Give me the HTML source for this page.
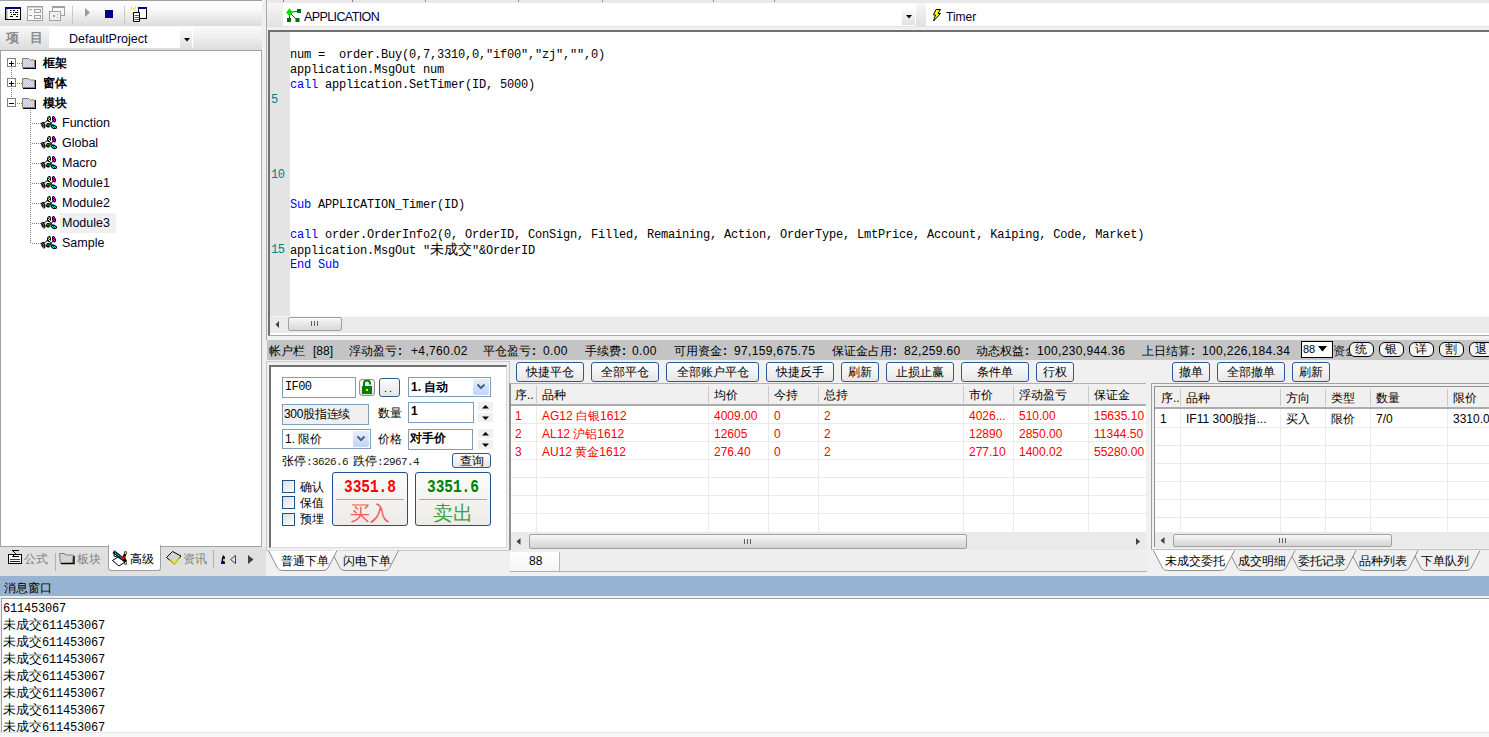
<!DOCTYPE html>
<html><head><meta charset="utf-8">
<style>
*{box-sizing:border-box}
html,body{margin:0;padding:0}
body{width:1489px;height:737px;overflow:hidden;position:relative;background:#F0F0F0;font-family:"Liberation Sans",sans-serif;font-size:12px;color:#000}
.a{position:absolute}
.t{position:absolute;white-space:nowrap;line-height:14px}
.mono{font-family:"Liberation Mono",monospace}
.btn{position:absolute;border:1px solid #2A5A94;border-radius:3px;background:linear-gradient(#FDFDFD,#E6E6E6);text-align:center;line-height:17px;padding-top:1px;white-space:nowrap}
.grid-h{position:absolute;background:#F0F0F0;border-bottom:2px solid #D5D5D5}
.vl{position:absolute;width:1px;background:#EAEAEA}
.hl{position:absolute;height:1px;background:#EAEAEA}
</style></head><body>

<!-- ============ LEFT PANEL ============ -->
<div class="a" style="left:0;top:0;width:262px;height:1px;background:#A0A0A0"></div>
<div class="a" style="left:0;top:1px;width:262px;height:25px;background:linear-gradient(#FDFDFD,#FAFAFA 30%,#DCDCDC)"></div>
<div class="a" style="left:0;top:26px;width:262px;height:24px;background:linear-gradient(#F8F8F8,#DCDCDC)"></div>
<svg class="a" style="left:0;top:0" width="262" height="26">
<rect x="5.5" y="7.5" width="15" height="12" fill="#FFF" stroke="#000"/><rect x="5" y="7" width="16" height="2" fill="#000080"/><rect x="6" y="9" width="1.5" height="10" fill="#A0A0A0"/>
<path d="M10 10.5H11.5M13 10.5H15M17 10.5H18M10 12.5H11.5M13 12.5H14M15 12.5H18M11 14.5H12M13 14.5H16M17 14.5H18M10 16.5H13M16 16.5H18" stroke="#000" stroke-width="1"/>
<rect x="27.5" y="6.5" width="15" height="14" fill="#F8F8F8" stroke="#A0A0A0"/><rect x="27" y="6" width="16" height="1.5" fill="#A0A0A0"/>
<path d="M29 9.5H32M29 15.5H32" stroke="#A0A0A0"/><rect x="34.5" y="9.5" width="6" height="3" fill="none" stroke="#A0A0A0"/><rect x="34.5" y="15.5" width="6" height="3" fill="none" stroke="#A0A0A0"/>
<rect x="52.5" y="6.5" width="12" height="9" fill="none" stroke="#A0A0A0"/><rect x="52" y="6" width="13" height="2" fill="#A0A0A0"/>
<rect x="49.5" y="11.5" width="11" height="9" fill="#F0F0F0" stroke="#A0A0A0"/><rect x="53" y="15" width="2" height="2" fill="#A0A0A0"/><rect x="57" y="14" width="1" height="1" fill="#A0A0A0"/><rect x="57" y="17" width="1" height="1" fill="#A0A0A0"/>
<rect x="72" y="6" width="1" height="18" fill="#C8C8C8"/>
<path d="M85 8V17L90 12.5Z" fill="#9A9A9A"/>
<rect x="105" y="10" width="8" height="8" fill="#000080"/>
<rect x="124" y="6" width="1" height="18" fill="#C8C8C8"/>
<rect x="138.5" y="7.5" width="8" height="11" fill="#FFF" stroke="#000"/><rect x="138" y="7" width="9" height="2" fill="#000080"/>
<path d="M131.5 6V10M133 8L137 12M136 6.5L134 9.5M131 13H134" stroke="#F0F000" stroke-width="1"/>
<path d="M133.5 12.5H139.5V21.5H133.5Z" fill="#FFF" stroke="#000"/><path d="M134.5 15.5H139M134.5 17.5H139M134.5 19.5H139" stroke="#2020D0" stroke-width="0.8"/>
</svg>
<div class="t" style="left:6px;top:31px;color:#8C8C8C;font-size:13px;letter-spacing:11px;font-weight:bold">项目</div>
<div class="a" style="left:49px;top:27px;width:213px;height:21px;background:#FFF"></div>
<div class="a" style="left:180px;top:30px;width:12px;height:18px;background:linear-gradient(#F8F8F8,#E0E0E0)"></div>
<div class="a" style="left:193px;top:27px;width:69px;height:21px;background:linear-gradient(#FAFAFA,#E0E0E0)"></div>
<div class="t" style="left:69px;top:32px;color:#000030;font-size:12.5px">DefaultProject</div>
<svg class="a" style="left:184px;top:38px" width="8" height="5"><path d="M0 0H6L3 3.5Z" fill="#000"/></svg>

<!-- tree box -->
<div class="a" style="left:0;top:50px;width:262px;height:497px;background:#FFF;border:1px solid #A0A0A0;border-right-color:#A8A8A8"></div>

<svg class="a" style="left:0;top:50px" width="262" height="496">
<defs><pattern id="dith" width="2" height="2" patternUnits="userSpaceOnUse"><rect width="2" height="2" fill="#C8C8D0"/><rect width="1" height="1" fill="#FFFF00"/><rect x="1" y="1" width="1" height="1" fill="#FFFF00"/></pattern></defs>
<rect x="11" y="18" width="1" height="1" fill="#808080"/><rect x="11" y="20" width="1" height="1" fill="#808080"/><rect x="11" y="22" width="1" height="1" fill="#808080"/><rect x="11" y="24" width="1" height="1" fill="#808080"/><rect x="11" y="26" width="1" height="1" fill="#808080"/><rect x="11" y="28" width="1" height="1" fill="#808080"/><rect x="11" y="30" width="1" height="1" fill="#808080"/><rect x="11" y="32" width="1" height="1" fill="#808080"/><rect x="11" y="34" width="1" height="1" fill="#808080"/><rect x="11" y="36" width="1" height="1" fill="#808080"/><rect x="11" y="38" width="1" height="1" fill="#808080"/><rect x="11" y="40" width="1" height="1" fill="#808080"/><rect x="11" y="42" width="1" height="1" fill="#808080"/><rect x="11" y="44" width="1" height="1" fill="#808080"/><rect x="11" y="46" width="1" height="1" fill="#808080"/><rect x="11" y="48" width="1" height="1" fill="#808080"/>
<rect x="17" y="13" width="1" height="1" fill="#808080"/><rect x="19" y="13" width="1" height="1" fill="#808080"/><rect x="21" y="13" width="1" height="1" fill="#808080"/>
<rect x="7.5" y="8.5" width="8" height="8" fill="#FFF" stroke="#808080"/>
<rect x="9" y="13" width="5" height="1" fill="#000"/>
<rect x="11" y="11" width="1" height="5" fill="#000"/>
<g transform="translate(21,6)"><path d="M1.5 2.5H7.5L9 4H13.5V11.5H1.5Z" fill="url(#dith)" stroke="#808080"/><path d="M14 4V12H2V13H15V4Z" fill="#000"/></g>
<rect x="17" y="33" width="1" height="1" fill="#808080"/><rect x="19" y="33" width="1" height="1" fill="#808080"/><rect x="21" y="33" width="1" height="1" fill="#808080"/>
<rect x="7.5" y="28.5" width="8" height="8" fill="#FFF" stroke="#808080"/>
<rect x="9" y="33" width="5" height="1" fill="#000"/>
<rect x="11" y="31" width="1" height="5" fill="#000"/>
<g transform="translate(21,26)"><path d="M1.5 2.5H7.5L9 4H13.5V11.5H1.5Z" fill="url(#dith)" stroke="#808080"/><path d="M14 4V12H2V13H15V4Z" fill="#000"/></g>
<rect x="17" y="53" width="1" height="1" fill="#808080"/><rect x="19" y="53" width="1" height="1" fill="#808080"/><rect x="21" y="53" width="1" height="1" fill="#808080"/>
<rect x="7.5" y="48.5" width="8" height="8" fill="#FFF" stroke="#808080"/>
<rect x="9" y="53" width="5" height="1" fill="#000"/>
<g transform="translate(21,46)"><path d="M1.5 2.5H7.5L9 4H13.5V11.5H1.5Z" fill="url(#dith)" stroke="#808080"/><path d="M14 4V12H2V13H15V4Z" fill="#000"/></g>
<rect x="30" y="60" width="1" height="1" fill="#808080"/><rect x="30" y="62" width="1" height="1" fill="#808080"/><rect x="30" y="64" width="1" height="1" fill="#808080"/><rect x="30" y="66" width="1" height="1" fill="#808080"/><rect x="30" y="68" width="1" height="1" fill="#808080"/><rect x="30" y="70" width="1" height="1" fill="#808080"/><rect x="30" y="72" width="1" height="1" fill="#808080"/><rect x="30" y="74" width="1" height="1" fill="#808080"/><rect x="30" y="76" width="1" height="1" fill="#808080"/><rect x="30" y="78" width="1" height="1" fill="#808080"/><rect x="30" y="80" width="1" height="1" fill="#808080"/><rect x="30" y="82" width="1" height="1" fill="#808080"/><rect x="30" y="84" width="1" height="1" fill="#808080"/><rect x="30" y="86" width="1" height="1" fill="#808080"/><rect x="30" y="88" width="1" height="1" fill="#808080"/><rect x="30" y="90" width="1" height="1" fill="#808080"/><rect x="30" y="92" width="1" height="1" fill="#808080"/><rect x="30" y="94" width="1" height="1" fill="#808080"/><rect x="30" y="96" width="1" height="1" fill="#808080"/><rect x="30" y="98" width="1" height="1" fill="#808080"/><rect x="30" y="100" width="1" height="1" fill="#808080"/><rect x="30" y="102" width="1" height="1" fill="#808080"/><rect x="30" y="104" width="1" height="1" fill="#808080"/><rect x="30" y="106" width="1" height="1" fill="#808080"/><rect x="30" y="108" width="1" height="1" fill="#808080"/><rect x="30" y="110" width="1" height="1" fill="#808080"/><rect x="30" y="112" width="1" height="1" fill="#808080"/><rect x="30" y="114" width="1" height="1" fill="#808080"/><rect x="30" y="116" width="1" height="1" fill="#808080"/><rect x="30" y="118" width="1" height="1" fill="#808080"/><rect x="30" y="120" width="1" height="1" fill="#808080"/><rect x="30" y="122" width="1" height="1" fill="#808080"/><rect x="30" y="124" width="1" height="1" fill="#808080"/><rect x="30" y="126" width="1" height="1" fill="#808080"/><rect x="30" y="128" width="1" height="1" fill="#808080"/><rect x="30" y="130" width="1" height="1" fill="#808080"/><rect x="30" y="132" width="1" height="1" fill="#808080"/><rect x="30" y="134" width="1" height="1" fill="#808080"/><rect x="30" y="136" width="1" height="1" fill="#808080"/><rect x="30" y="138" width="1" height="1" fill="#808080"/><rect x="30" y="140" width="1" height="1" fill="#808080"/><rect x="30" y="142" width="1" height="1" fill="#808080"/><rect x="30" y="144" width="1" height="1" fill="#808080"/><rect x="30" y="146" width="1" height="1" fill="#808080"/><rect x="30" y="148" width="1" height="1" fill="#808080"/><rect x="30" y="150" width="1" height="1" fill="#808080"/><rect x="30" y="152" width="1" height="1" fill="#808080"/><rect x="30" y="154" width="1" height="1" fill="#808080"/><rect x="30" y="156" width="1" height="1" fill="#808080"/><rect x="30" y="158" width="1" height="1" fill="#808080"/><rect x="30" y="160" width="1" height="1" fill="#808080"/><rect x="30" y="162" width="1" height="1" fill="#808080"/><rect x="30" y="164" width="1" height="1" fill="#808080"/><rect x="30" y="166" width="1" height="1" fill="#808080"/><rect x="30" y="168" width="1" height="1" fill="#808080"/><rect x="30" y="170" width="1" height="1" fill="#808080"/><rect x="30" y="172" width="1" height="1" fill="#808080"/><rect x="30" y="174" width="1" height="1" fill="#808080"/><rect x="30" y="176" width="1" height="1" fill="#808080"/><rect x="30" y="178" width="1" height="1" fill="#808080"/><rect x="30" y="180" width="1" height="1" fill="#808080"/><rect x="30" y="182" width="1" height="1" fill="#808080"/><rect x="30" y="184" width="1" height="1" fill="#808080"/><rect x="30" y="186" width="1" height="1" fill="#808080"/><rect x="30" y="188" width="1" height="1" fill="#808080"/><rect x="30" y="190" width="1" height="1" fill="#808080"/><rect x="30" y="192" width="1" height="1" fill="#808080"/>
<rect x="32" y="73" width="1" height="1" fill="#808080"/><rect x="34" y="73" width="1" height="1" fill="#808080"/><rect x="36" y="73" width="1" height="1" fill="#808080"/><rect x="38" y="73" width="1" height="1" fill="#808080"/><rect x="40" y="73" width="1" height="1" fill="#808080"/>
<g transform="translate(41,66)"><path d="M3 7L7 4M8 5L12 10M8 10L12 5" stroke="#000" stroke-width="1"/>
<path d="M6.5 1L8 0H9L10 1.5V4L8.5 6H7L6 4.5V2.5Z" fill="#000"/><rect x="7.5" y="1" width="1" height="1" fill="#FF0"/><rect x="8" y="2" width="1" height="1" fill="#FF0"/><rect x="7" y="3" width="1" height="1" fill="#FF0"/><rect x="8" y="4" width="1" height="1" fill="#FF0"/><rect x="7.5" y="2.5" width="1" height="1" fill="#FF0"/>
<path d="M11 1L12 0H13L15 3V5L14 6.5H13L11 4Z" fill="#000"/><rect x="12" y="1" width="1" height="1" fill="#F0F"/><rect x="13" y="2" width="1" height="1" fill="#F0F"/><rect x="12" y="3" width="1" height="1" fill="#F0F"/><rect x="13" y="4" width="1" height="1" fill="#F0F"/><rect x="12.5" y="3" width="1" height="1" fill="#F0F"/>
<path d="M0 7L1.5 6H2.5L4.5 9V11L3.5 12.5H2.5L0.5 10Z" fill="#000"/><rect x="1" y="7" width="1" height="1" fill="#F0F"/><rect x="2" y="8" width="1" height="1" fill="#F0F"/><rect x="1.5" y="9" width="1" height="1" fill="#F0F"/><rect x="2.5" y="10" width="1" height="1" fill="#F0F"/><rect x="2" y="11" width="1" height="1" fill="#F0F"/>
<path d="M5 8L6.5 7H8L9.5 8V10.5L8 11.5H6.5L5 10.5Z" fill="#000"/><rect x="5.5" y="8" width="1" height="1" fill="#0D0"/><rect x="6.5" y="9" width="1" height="1" fill="#0D0"/><rect x="7.5" y="8" width="1" height="1" fill="#0D0"/><rect x="8" y="9.5" width="1" height="1" fill="#0D0"/>
<path d="M10 9.5L11.5 8.5H13L16 10.5V12L15 13H12L10 11Z" fill="#000"/><rect x="11" y="10" width="1" height="1" fill="#0EE"/><rect x="12" y="11" width="1" height="1" fill="#0EE"/><rect x="13" y="10" width="1" height="1" fill="#0EE"/><rect x="14" y="11" width="1" height="1" fill="#0EE"/><rect x="12.5" y="10.5" width="1" height="1" fill="#0EE"/></g>
<rect x="32" y="93" width="1" height="1" fill="#808080"/><rect x="34" y="93" width="1" height="1" fill="#808080"/><rect x="36" y="93" width="1" height="1" fill="#808080"/><rect x="38" y="93" width="1" height="1" fill="#808080"/><rect x="40" y="93" width="1" height="1" fill="#808080"/>
<g transform="translate(41,86)"><path d="M3 7L7 4M8 5L12 10M8 10L12 5" stroke="#000" stroke-width="1"/>
<path d="M6.5 1L8 0H9L10 1.5V4L8.5 6H7L6 4.5V2.5Z" fill="#000"/><rect x="7.5" y="1" width="1" height="1" fill="#FF0"/><rect x="8" y="2" width="1" height="1" fill="#FF0"/><rect x="7" y="3" width="1" height="1" fill="#FF0"/><rect x="8" y="4" width="1" height="1" fill="#FF0"/><rect x="7.5" y="2.5" width="1" height="1" fill="#FF0"/>
<path d="M11 1L12 0H13L15 3V5L14 6.5H13L11 4Z" fill="#000"/><rect x="12" y="1" width="1" height="1" fill="#F0F"/><rect x="13" y="2" width="1" height="1" fill="#F0F"/><rect x="12" y="3" width="1" height="1" fill="#F0F"/><rect x="13" y="4" width="1" height="1" fill="#F0F"/><rect x="12.5" y="3" width="1" height="1" fill="#F0F"/>
<path d="M0 7L1.5 6H2.5L4.5 9V11L3.5 12.5H2.5L0.5 10Z" fill="#000"/><rect x="1" y="7" width="1" height="1" fill="#F0F"/><rect x="2" y="8" width="1" height="1" fill="#F0F"/><rect x="1.5" y="9" width="1" height="1" fill="#F0F"/><rect x="2.5" y="10" width="1" height="1" fill="#F0F"/><rect x="2" y="11" width="1" height="1" fill="#F0F"/>
<path d="M5 8L6.5 7H8L9.5 8V10.5L8 11.5H6.5L5 10.5Z" fill="#000"/><rect x="5.5" y="8" width="1" height="1" fill="#0D0"/><rect x="6.5" y="9" width="1" height="1" fill="#0D0"/><rect x="7.5" y="8" width="1" height="1" fill="#0D0"/><rect x="8" y="9.5" width="1" height="1" fill="#0D0"/>
<path d="M10 9.5L11.5 8.5H13L16 10.5V12L15 13H12L10 11Z" fill="#000"/><rect x="11" y="10" width="1" height="1" fill="#0EE"/><rect x="12" y="11" width="1" height="1" fill="#0EE"/><rect x="13" y="10" width="1" height="1" fill="#0EE"/><rect x="14" y="11" width="1" height="1" fill="#0EE"/><rect x="12.5" y="10.5" width="1" height="1" fill="#0EE"/></g>
<rect x="32" y="113" width="1" height="1" fill="#808080"/><rect x="34" y="113" width="1" height="1" fill="#808080"/><rect x="36" y="113" width="1" height="1" fill="#808080"/><rect x="38" y="113" width="1" height="1" fill="#808080"/><rect x="40" y="113" width="1" height="1" fill="#808080"/>
<g transform="translate(41,106)"><path d="M3 7L7 4M8 5L12 10M8 10L12 5" stroke="#000" stroke-width="1"/>
<path d="M6.5 1L8 0H9L10 1.5V4L8.5 6H7L6 4.5V2.5Z" fill="#000"/><rect x="7.5" y="1" width="1" height="1" fill="#FF0"/><rect x="8" y="2" width="1" height="1" fill="#FF0"/><rect x="7" y="3" width="1" height="1" fill="#FF0"/><rect x="8" y="4" width="1" height="1" fill="#FF0"/><rect x="7.5" y="2.5" width="1" height="1" fill="#FF0"/>
<path d="M11 1L12 0H13L15 3V5L14 6.5H13L11 4Z" fill="#000"/><rect x="12" y="1" width="1" height="1" fill="#F0F"/><rect x="13" y="2" width="1" height="1" fill="#F0F"/><rect x="12" y="3" width="1" height="1" fill="#F0F"/><rect x="13" y="4" width="1" height="1" fill="#F0F"/><rect x="12.5" y="3" width="1" height="1" fill="#F0F"/>
<path d="M0 7L1.5 6H2.5L4.5 9V11L3.5 12.5H2.5L0.5 10Z" fill="#000"/><rect x="1" y="7" width="1" height="1" fill="#F0F"/><rect x="2" y="8" width="1" height="1" fill="#F0F"/><rect x="1.5" y="9" width="1" height="1" fill="#F0F"/><rect x="2.5" y="10" width="1" height="1" fill="#F0F"/><rect x="2" y="11" width="1" height="1" fill="#F0F"/>
<path d="M5 8L6.5 7H8L9.5 8V10.5L8 11.5H6.5L5 10.5Z" fill="#000"/><rect x="5.5" y="8" width="1" height="1" fill="#0D0"/><rect x="6.5" y="9" width="1" height="1" fill="#0D0"/><rect x="7.5" y="8" width="1" height="1" fill="#0D0"/><rect x="8" y="9.5" width="1" height="1" fill="#0D0"/>
<path d="M10 9.5L11.5 8.5H13L16 10.5V12L15 13H12L10 11Z" fill="#000"/><rect x="11" y="10" width="1" height="1" fill="#0EE"/><rect x="12" y="11" width="1" height="1" fill="#0EE"/><rect x="13" y="10" width="1" height="1" fill="#0EE"/><rect x="14" y="11" width="1" height="1" fill="#0EE"/><rect x="12.5" y="10.5" width="1" height="1" fill="#0EE"/></g>
<rect x="32" y="133" width="1" height="1" fill="#808080"/><rect x="34" y="133" width="1" height="1" fill="#808080"/><rect x="36" y="133" width="1" height="1" fill="#808080"/><rect x="38" y="133" width="1" height="1" fill="#808080"/><rect x="40" y="133" width="1" height="1" fill="#808080"/>
<g transform="translate(41,126)"><path d="M3 7L7 4M8 5L12 10M8 10L12 5" stroke="#000" stroke-width="1"/>
<path d="M6.5 1L8 0H9L10 1.5V4L8.5 6H7L6 4.5V2.5Z" fill="#000"/><rect x="7.5" y="1" width="1" height="1" fill="#FF0"/><rect x="8" y="2" width="1" height="1" fill="#FF0"/><rect x="7" y="3" width="1" height="1" fill="#FF0"/><rect x="8" y="4" width="1" height="1" fill="#FF0"/><rect x="7.5" y="2.5" width="1" height="1" fill="#FF0"/>
<path d="M11 1L12 0H13L15 3V5L14 6.5H13L11 4Z" fill="#000"/><rect x="12" y="1" width="1" height="1" fill="#F0F"/><rect x="13" y="2" width="1" height="1" fill="#F0F"/><rect x="12" y="3" width="1" height="1" fill="#F0F"/><rect x="13" y="4" width="1" height="1" fill="#F0F"/><rect x="12.5" y="3" width="1" height="1" fill="#F0F"/>
<path d="M0 7L1.5 6H2.5L4.5 9V11L3.5 12.5H2.5L0.5 10Z" fill="#000"/><rect x="1" y="7" width="1" height="1" fill="#F0F"/><rect x="2" y="8" width="1" height="1" fill="#F0F"/><rect x="1.5" y="9" width="1" height="1" fill="#F0F"/><rect x="2.5" y="10" width="1" height="1" fill="#F0F"/><rect x="2" y="11" width="1" height="1" fill="#F0F"/>
<path d="M5 8L6.5 7H8L9.5 8V10.5L8 11.5H6.5L5 10.5Z" fill="#000"/><rect x="5.5" y="8" width="1" height="1" fill="#0D0"/><rect x="6.5" y="9" width="1" height="1" fill="#0D0"/><rect x="7.5" y="8" width="1" height="1" fill="#0D0"/><rect x="8" y="9.5" width="1" height="1" fill="#0D0"/>
<path d="M10 9.5L11.5 8.5H13L16 10.5V12L15 13H12L10 11Z" fill="#000"/><rect x="11" y="10" width="1" height="1" fill="#0EE"/><rect x="12" y="11" width="1" height="1" fill="#0EE"/><rect x="13" y="10" width="1" height="1" fill="#0EE"/><rect x="14" y="11" width="1" height="1" fill="#0EE"/><rect x="12.5" y="10.5" width="1" height="1" fill="#0EE"/></g>
<rect x="32" y="153" width="1" height="1" fill="#808080"/><rect x="34" y="153" width="1" height="1" fill="#808080"/><rect x="36" y="153" width="1" height="1" fill="#808080"/><rect x="38" y="153" width="1" height="1" fill="#808080"/><rect x="40" y="153" width="1" height="1" fill="#808080"/>
<g transform="translate(41,146)"><path d="M3 7L7 4M8 5L12 10M8 10L12 5" stroke="#000" stroke-width="1"/>
<path d="M6.5 1L8 0H9L10 1.5V4L8.5 6H7L6 4.5V2.5Z" fill="#000"/><rect x="7.5" y="1" width="1" height="1" fill="#FF0"/><rect x="8" y="2" width="1" height="1" fill="#FF0"/><rect x="7" y="3" width="1" height="1" fill="#FF0"/><rect x="8" y="4" width="1" height="1" fill="#FF0"/><rect x="7.5" y="2.5" width="1" height="1" fill="#FF0"/>
<path d="M11 1L12 0H13L15 3V5L14 6.5H13L11 4Z" fill="#000"/><rect x="12" y="1" width="1" height="1" fill="#F0F"/><rect x="13" y="2" width="1" height="1" fill="#F0F"/><rect x="12" y="3" width="1" height="1" fill="#F0F"/><rect x="13" y="4" width="1" height="1" fill="#F0F"/><rect x="12.5" y="3" width="1" height="1" fill="#F0F"/>
<path d="M0 7L1.5 6H2.5L4.5 9V11L3.5 12.5H2.5L0.5 10Z" fill="#000"/><rect x="1" y="7" width="1" height="1" fill="#F0F"/><rect x="2" y="8" width="1" height="1" fill="#F0F"/><rect x="1.5" y="9" width="1" height="1" fill="#F0F"/><rect x="2.5" y="10" width="1" height="1" fill="#F0F"/><rect x="2" y="11" width="1" height="1" fill="#F0F"/>
<path d="M5 8L6.5 7H8L9.5 8V10.5L8 11.5H6.5L5 10.5Z" fill="#000"/><rect x="5.5" y="8" width="1" height="1" fill="#0D0"/><rect x="6.5" y="9" width="1" height="1" fill="#0D0"/><rect x="7.5" y="8" width="1" height="1" fill="#0D0"/><rect x="8" y="9.5" width="1" height="1" fill="#0D0"/>
<path d="M10 9.5L11.5 8.5H13L16 10.5V12L15 13H12L10 11Z" fill="#000"/><rect x="11" y="10" width="1" height="1" fill="#0EE"/><rect x="12" y="11" width="1" height="1" fill="#0EE"/><rect x="13" y="10" width="1" height="1" fill="#0EE"/><rect x="14" y="11" width="1" height="1" fill="#0EE"/><rect x="12.5" y="10.5" width="1" height="1" fill="#0EE"/></g>
<rect x="32" y="173" width="1" height="1" fill="#808080"/><rect x="34" y="173" width="1" height="1" fill="#808080"/><rect x="36" y="173" width="1" height="1" fill="#808080"/><rect x="38" y="173" width="1" height="1" fill="#808080"/><rect x="40" y="173" width="1" height="1" fill="#808080"/>
<g transform="translate(41,166)"><path d="M3 7L7 4M8 5L12 10M8 10L12 5" stroke="#000" stroke-width="1"/>
<path d="M6.5 1L8 0H9L10 1.5V4L8.5 6H7L6 4.5V2.5Z" fill="#000"/><rect x="7.5" y="1" width="1" height="1" fill="#FF0"/><rect x="8" y="2" width="1" height="1" fill="#FF0"/><rect x="7" y="3" width="1" height="1" fill="#FF0"/><rect x="8" y="4" width="1" height="1" fill="#FF0"/><rect x="7.5" y="2.5" width="1" height="1" fill="#FF0"/>
<path d="M11 1L12 0H13L15 3V5L14 6.5H13L11 4Z" fill="#000"/><rect x="12" y="1" width="1" height="1" fill="#F0F"/><rect x="13" y="2" width="1" height="1" fill="#F0F"/><rect x="12" y="3" width="1" height="1" fill="#F0F"/><rect x="13" y="4" width="1" height="1" fill="#F0F"/><rect x="12.5" y="3" width="1" height="1" fill="#F0F"/>
<path d="M0 7L1.5 6H2.5L4.5 9V11L3.5 12.5H2.5L0.5 10Z" fill="#000"/><rect x="1" y="7" width="1" height="1" fill="#F0F"/><rect x="2" y="8" width="1" height="1" fill="#F0F"/><rect x="1.5" y="9" width="1" height="1" fill="#F0F"/><rect x="2.5" y="10" width="1" height="1" fill="#F0F"/><rect x="2" y="11" width="1" height="1" fill="#F0F"/>
<path d="M5 8L6.5 7H8L9.5 8V10.5L8 11.5H6.5L5 10.5Z" fill="#000"/><rect x="5.5" y="8" width="1" height="1" fill="#0D0"/><rect x="6.5" y="9" width="1" height="1" fill="#0D0"/><rect x="7.5" y="8" width="1" height="1" fill="#0D0"/><rect x="8" y="9.5" width="1" height="1" fill="#0D0"/>
<path d="M10 9.5L11.5 8.5H13L16 10.5V12L15 13H12L10 11Z" fill="#000"/><rect x="11" y="10" width="1" height="1" fill="#0EE"/><rect x="12" y="11" width="1" height="1" fill="#0EE"/><rect x="13" y="10" width="1" height="1" fill="#0EE"/><rect x="14" y="11" width="1" height="1" fill="#0EE"/><rect x="12.5" y="10.5" width="1" height="1" fill="#0EE"/></g>
<rect x="32" y="193" width="1" height="1" fill="#808080"/><rect x="34" y="193" width="1" height="1" fill="#808080"/><rect x="36" y="193" width="1" height="1" fill="#808080"/><rect x="38" y="193" width="1" height="1" fill="#808080"/><rect x="40" y="193" width="1" height="1" fill="#808080"/>
<g transform="translate(41,186)"><path d="M3 7L7 4M8 5L12 10M8 10L12 5" stroke="#000" stroke-width="1"/>
<path d="M6.5 1L8 0H9L10 1.5V4L8.5 6H7L6 4.5V2.5Z" fill="#000"/><rect x="7.5" y="1" width="1" height="1" fill="#FF0"/><rect x="8" y="2" width="1" height="1" fill="#FF0"/><rect x="7" y="3" width="1" height="1" fill="#FF0"/><rect x="8" y="4" width="1" height="1" fill="#FF0"/><rect x="7.5" y="2.5" width="1" height="1" fill="#FF0"/>
<path d="M11 1L12 0H13L15 3V5L14 6.5H13L11 4Z" fill="#000"/><rect x="12" y="1" width="1" height="1" fill="#F0F"/><rect x="13" y="2" width="1" height="1" fill="#F0F"/><rect x="12" y="3" width="1" height="1" fill="#F0F"/><rect x="13" y="4" width="1" height="1" fill="#F0F"/><rect x="12.5" y="3" width="1" height="1" fill="#F0F"/>
<path d="M0 7L1.5 6H2.5L4.5 9V11L3.5 12.5H2.5L0.5 10Z" fill="#000"/><rect x="1" y="7" width="1" height="1" fill="#F0F"/><rect x="2" y="8" width="1" height="1" fill="#F0F"/><rect x="1.5" y="9" width="1" height="1" fill="#F0F"/><rect x="2.5" y="10" width="1" height="1" fill="#F0F"/><rect x="2" y="11" width="1" height="1" fill="#F0F"/>
<path d="M5 8L6.5 7H8L9.5 8V10.5L8 11.5H6.5L5 10.5Z" fill="#000"/><rect x="5.5" y="8" width="1" height="1" fill="#0D0"/><rect x="6.5" y="9" width="1" height="1" fill="#0D0"/><rect x="7.5" y="8" width="1" height="1" fill="#0D0"/><rect x="8" y="9.5" width="1" height="1" fill="#0D0"/>
<path d="M10 9.5L11.5 8.5H13L16 10.5V12L15 13H12L10 11Z" fill="#000"/><rect x="11" y="10" width="1" height="1" fill="#0EE"/><rect x="12" y="11" width="1" height="1" fill="#0EE"/><rect x="13" y="10" width="1" height="1" fill="#0EE"/><rect x="14" y="11" width="1" height="1" fill="#0EE"/><rect x="12.5" y="10.5" width="1" height="1" fill="#0EE"/></g>
<rect x="60" y="163" width="56" height="20" fill="#F0F0F0"/>
</svg>
<div class="t" style="left:43px;top:56px;font-weight:bold;font-size:12px">框架</div>
<div class="t" style="left:43px;top:76px;font-weight:bold;font-size:12px">窗体</div>
<div class="t" style="left:43px;top:96px;font-weight:bold;font-size:12px">模块</div>
<div class="t" style="left:62px;top:116px;font-size:12.5px;color:#000020">Function</div>
<div class="t" style="left:62px;top:136px;font-size:12.5px;color:#000020">Global</div>
<div class="t" style="left:62px;top:156px;font-size:12.5px;color:#000020">Macro</div>
<div class="t" style="left:62px;top:176px;font-size:12.5px;color:#000020">Module1</div>
<div class="t" style="left:62px;top:196px;font-size:12.5px;color:#000020">Module2</div>
<div class="t" style="left:62px;top:216px;font-size:12.5px;color:#000020">Module3</div>
<div class="t" style="left:62px;top:236px;font-size:12.5px;color:#000020">Sample</div>
<!-- bottom tabs -->
<div class="a" style="left:0;top:547px;width:266px;height:29px;background:#E0E0E0"></div>
<div class="a" style="left:108px;top:545px;width:53px;height:26px;background:#FFF;border:1px solid #A0A0A0;border-top:none;border-radius:0 0 3px 3px"></div>
<div class="a" style="left:55px;top:553px;width:1px;height:18px;background:#B0B0B0"></div>
<div class="a" style="left:213px;top:550px;width:1px;height:18px;background:#B0B0B0"></div>
<svg class="a" style="left:6px;top:549px" width="18" height="16"><rect x="2.5" y="5.5" width="13" height="9" fill="#FFF" stroke="#000"/><path d="M6 1.5H13M6.5 1.5L9.5 4.5L6.5 7.5H13" stroke="#000" fill="none"/><path d="M4 10.5H14" stroke="#D00000"/><path d="M4 12.5H14" stroke="#0000D0"/></svg>
<div class="t" style="left:24px;top:552px;color:#808080">公式</div>
<svg class="a" style="left:58px;top:551px" width="18" height="14"><path d="M1.5 2.5H6L8 4H15.5L14 12.5H2.5Z" fill="url(#dith)" stroke="#808080"/><path d="M3 12.5H16V5" stroke="#000" stroke-width="1.5" fill="none"/></svg>
<div class="t" style="left:77px;top:552px;color:#808080">板块</div>
<svg class="a" style="left:105px;top:545px" width="24" height="24"><path d="M7.5 15.5L13 12L20 17L14 21Z" fill="#FFF" stroke="#000" stroke-linejoin="round"/>
<path d="M8.5 6.5L21 16.5" stroke="#000" stroke-width="3"/><path d="M8.5 6.5L21 16.5" stroke="#00E8F0" stroke-width="1.2" stroke-dasharray="1.2 0.8"/>
<path d="M9 7L9 11L12 12" stroke="#000" fill="none"/>
<path d="M21 6.5L19 12L21 19.5" stroke="#000" stroke-width="2.6" fill="none"/><path d="M21 7L20 9M20.5 17L21 19" stroke="#F0F000" stroke-width="1.4"/><rect x="17.5" y="11.5" width="2.5" height="2.5" fill="#F00000"/></svg>
<div class="t" style="left:130px;top:552px;color:#000">高级</div>
<svg class="a" style="left:165px;top:550px" width="18" height="16"><path d="M1.5 7.5L7.5 1.5L16 6L9.5 14Z" fill="#D4D4D4" stroke="#000"/><path d="M5 9.5L9.5 13.5L15 8" stroke="#D8D800" stroke-width="1.5" fill="none"/><path d="M8 12H11" stroke="#E8E800" stroke-width="1.5"/></svg>
<div class="t" style="left:183px;top:552px;color:#808080">资讯</div>
<svg class="a" style="left:220px;top:554px" width="6" height="11"><path d="M3 1L5 3L4 10H1L2 4Z" fill="#000"/><rect x="1" y="8" width="4" height="2" fill="#000090"/><rect x="3" y="5" width="2" height="2" fill="#E0E000"/></svg>
<svg class="a" style="left:229px;top:554px" width="8" height="11"><path d="M6.5 1.5V9.5L1.5 5.5Z" fill="none" stroke="#404040"/></svg>
<svg class="a" style="left:247px;top:554px" width="8" height="11"><path d="M1 1V10L6.5 5.5Z" fill="#404040"/></svg>

<!-- splitter -->
<div class="a" style="left:262px;top:0;width:5px;height:546px;background:#F0F0F0"></div>

<!-- ============ EDITOR ============ -->
<div class="a" style="left:267px;top:0;width:1222px;height:3px;background:#E8E8E8"></div>
<div class="a" style="left:267px;top:3px;width:1222px;height:24px;background:linear-gradient(#F6F6F6,#E2E2E2)"></div>
<div class="a" style="left:283px;top:3px;width:1206px;height:23px;background:#FFF"></div>
<div class="t" style="left:304px;top:10px;color:#000030;font-size:12.5px;letter-spacing:-0.6px">APPLICATION</div>

<!-- code box -->
<div class="a" style="left:268px;top:30px;width:1221px;height:306px;background:#FFF;border-top:2px solid #707070;border-left:2px solid #707070;border-bottom:1px solid #A8A8A8"></div>
<div class="a" style="left:270px;top:32px;width:20px;height:284px;background:#E4E4E4"></div>

<div class="t mono" style="white-space:pre;left:290px;top:48px;font-size:12px;line-height:15px;letter-spacing:-0.2px">num =  order.Buy(0,7,3310,0,"if00","zj","",0)</div>
<div class="t mono" style="white-space:pre;left:290px;top:63px;font-size:12px;line-height:15px;letter-spacing:-0.2px">application.MsgOut num</div>
<div class="t mono" style="white-space:pre;left:290px;top:78px;font-size:12px;line-height:15px;letter-spacing:-0.2px"><span style="color:#0000FF">call</span> application.SetTimer(ID, 5000)</div>
<div class="t mono" style="white-space:pre;left:290px;top:198px;font-size:12px;line-height:15px;letter-spacing:-0.2px"><span style="color:#0000FF">Sub</span> APPLICATION_Timer(ID)</div>
<div class="t mono" style="white-space:pre;left:290px;top:228px;font-size:12px;line-height:15px;letter-spacing:-0.2px"><span style="color:#0000FF">call</span> order.OrderInfo2(0, OrderID, ConSign, Filled, Remaining, Action, OrderType, LmtPrice, Account, Kaiping, Code, Market)</div>
<div class="t mono" style="white-space:pre;left:290px;top:243px;font-size:12px;line-height:15px;letter-spacing:-0.2px">application.MsgOut "<span style="font-size:14px;letter-spacing:0">未成交</span>"&amp;OrderID</div>
<div class="t mono" style="white-space:pre;left:290px;top:258px;font-size:12px;line-height:15px;letter-spacing:-0.2px"><span style="color:#0000FF">End Sub</span></div>
<div class="t mono" style="left:271px;top:93px;font-size:12px;line-height:15px;letter-spacing:-0.5px;color:#008080">5</div>
<div class="t mono" style="left:271px;top:168px;font-size:12px;line-height:15px;letter-spacing:-0.5px;color:#008080">10</div>
<div class="t mono" style="left:271px;top:243px;font-size:12px;line-height:15px;letter-spacing:-0.5px;color:#008080">15</div>

<!-- ============ ACCOUNT BAR ============ -->
<div class="a" style="left:267px;top:340px;width:1222px;height:20px;background:#C4C4C4"></div>

<div class="a" style="left:266px;top:0;width:1px;height:340px;background:#A8A8A8"></div>
<div class="a" style="left:283px;top:0;width:1px;height:2px;background:#808080"></div>
<div class="a" style="left:352px;top:0;width:1px;height:2px;background:#808080"></div><div class="a" style="left:425px;top:0;width:1px;height:2px;background:#909090"></div><div class="a" style="left:518px;top:0;width:1px;height:2px;background:#909090"></div><div class="a" style="left:602px;top:0;width:1px;height:2px;background:#909090"></div><div class="a" style="left:713px;top:0;width:1px;height:2px;background:#909090"></div><div class="a" style="left:774px;top:0;width:1px;height:2px;background:#909090"></div>
<svg class="a" style="left:286px;top:8px" width="16" height="15"><path d="M3.5 4.5L13 3M3.5 4.5V12M3.5 4.5L11 12" stroke="#404040" fill="none"/><path d="M3.5 0.5L7 4.5L3.5 8L0 4.5Z" fill="#00E000"/><rect x="11" y="1" width="4" height="4" fill="#007000"/><rect x="1" y="10" width="4" height="4" fill="#007000"/><rect x="9.5" y="10" width="4" height="4" fill="#007000"/></svg>
<div class="a" style="left:902px;top:7px;width:13px;height:18px;background:linear-gradient(#FFF,#E0E0E0)"></div>
<svg class="a" style="left:906px;top:15px" width="8" height="5"><path d="M0 0H6L3 3.5Z" fill="#000"/></svg>
<div class="a" style="left:916px;top:3px;width:10px;height:23px;background:linear-gradient(#F6F6F6,#E0E0E0)"></div>
<div class="a" style="left:926px;top:3px;width:563px;height:23px;background:#FFF"></div>
<svg class="a" style="left:932px;top:9px" width="10" height="13"><path d="M4 0.5H8.5L6 4.5H8.5L1.5 12L3.5 6H1.5Z" fill="#FFFF00" stroke="#000" stroke-width="1"/></svg>
<div class="t" style="left:946px;top:10px;font-size:12px;color:#000030">Timer</div>

<div class="a" style="left:270px;top:316px;width:1219px;height:17px;background:#EAEAEA;border-top:1px solid #F6F6F6"></div>
<svg class="a" style="left:275px;top:320px" width="6" height="9"><path d="M4 1V8L0.5 4.5Z" fill="#404040"/></svg>
<div class="a" style="left:288px;top:317px;width:54px;height:14px;border:1px solid #A0A0A0;border-radius:2px;background:linear-gradient(#F8F8F8,#E6E6E6 50%,#D8D8D8)"></div>
<svg class="a" style="left:310px;top:320px" width="9" height="7"><path d="M1.5 1V6M4.5 1V6M7.5 1V6" stroke="#606060"/></svg>

<div class="t" style="left:269px;top:344px">帐户栏</div>
<div class="t" style="left:313px;top:344px">[88]</div>
<div class="t" style="left:349px;top:344px">浮动盈亏<span style="margin-left:1px;font-weight:bold">:</span></div>
<div class="t" style="left:411px;top:344px;letter-spacing:0.35px">+4,760.02</div>
<div class="t" style="left:483px;top:344px">平仓盈亏<span style="margin-left:1px;font-weight:bold">:</span></div>
<div class="t" style="left:543px;top:344px;letter-spacing:0.35px">0.00</div>
<div class="t" style="left:585px;top:344px">手续费<span style="margin-left:1px;font-weight:bold">:</span></div>
<div class="t" style="left:632px;top:344px;letter-spacing:0.35px">0.00</div>
<div class="t" style="left:674px;top:344px">可用资金<span style="margin-left:1px;font-weight:bold">:</span></div>
<div class="t" style="left:734px;top:344px;letter-spacing:0.35px">97,159,675.75</div>
<div class="t" style="left:832px;top:344px">保证金占用<span style="margin-left:1px;font-weight:bold">:</span></div>
<div class="t" style="left:904px;top:344px;letter-spacing:0.35px">82,259.60</div>
<div class="t" style="left:976px;top:344px">动态权益<span style="margin-left:1px;font-weight:bold">:</span></div>
<div class="t" style="left:1037px;top:344px;letter-spacing:0.35px">100,230,944.36</div>
<div class="t" style="left:1142px;top:344px">上日结算<span style="margin-left:1px;font-weight:bold">:</span></div>
<div class="t" style="left:1202px;top:344px;letter-spacing:0.35px">100,226,184.34</div>
<div class="a" style="left:1301px;top:341px;width:32px;height:17px;background:#FFF;border:1px solid #000"></div>
<div class="t" style="left:1303px;top:342px;font-size:11px">88</div>
<svg class="a" style="left:1318px;top:346px" width="10" height="6"><path d="M0 0H9L4.5 5.5Z" fill="#000"/></svg>
<div class="t" style="left:1333px;top:344px;color:#202020">资金</div>

<div class="a" style="left:1349px;top:342px;width:25px;height:15px;border:1px solid #000;border-radius:6px;background:#F4F4F4"></div><div class="t" style="left:1355px;top:342px">统</div>
<div class="a" style="left:1379px;top:342px;width:25px;height:15px;border:1px solid #000;border-radius:6px;background:#F4F4F4"></div><div class="t" style="left:1385px;top:342px">银</div>
<div class="a" style="left:1409px;top:342px;width:25px;height:15px;border:1px solid #000;border-radius:6px;background:#F4F4F4"></div><div class="t" style="left:1415px;top:342px">详</div>
<div class="a" style="left:1439px;top:342px;width:25px;height:15px;border:1px solid #000;border-radius:6px;background:#F4F4F4"></div><div class="t" style="left:1445px;top:342px">割</div>
<div class="a" style="left:1469px;top:342px;width:25px;height:15px;border:1px solid #000;border-radius:6px;background:#F4F4F4"></div><div class="t" style="left:1475px;top:342px">退</div>
<div class="a" style="left:266px;top:361px;width:244px;height:190px;background:#F0F0F0;border:1px solid #C8C8C8"></div>
<div class="a" style="left:269px;top:365px;width:238px;height:183px;background:#FFF;border-top:2px solid #707070;border-left:2px solid #707070;border-right:1px solid #D8D8D8;border-bottom:1px solid #D8D8D8"></div>
<div class="a" style="left:282px;top:377px;width:74px;height:21px;background:#FFF;border:1px solid #7F9DB9"></div>
<div class="t mono" style="left:285px;top:380px;font-size:12px;letter-spacing:-0.6px">IF00</div>
<div class="a" style="left:359px;top:379px;width:16px;height:17px;border:1px solid #909090;border-radius:3px;background:linear-gradient(#FAFAFA,#E0E0E0)"></div>
<svg class="a" style="left:361px;top:380px" width="12" height="15"><path d="M3 6V3.5A3 3 0 0 1 9 3.5V4.5" stroke="#008000" stroke-width="2" fill="none"/><rect x="1" y="6" width="10" height="8" fill="#008000"/><rect x="5" y="9" width="2" height="2" fill="#FFFF00"/></svg>
<div class="a" style="left:379px;top:378px;width:21px;height:19px;border:1px solid #2B5A93;border-radius:3px;background:linear-gradient(#FDFDFD,#E4E4E4)"></div>
<div class="t" style="left:384px;top:381px;font-size:11px;letter-spacing:2px">..</div>
<div class="a" style="left:408px;top:377px;width:83px;height:20px;background:#FFF;border:1px solid #7F9DB9"></div>
<div class="t" style="left:411px;top:380px;font-weight:bold">1. 自动</div>
<div class="a" style="left:473px;top:379px;width:16px;height:16px;border-radius:2px;background:linear-gradient(#E6EEFC,#C0D4F8)"></div>
<svg class="a" style="left:476px;top:383px" width="10" height="8"><path d="M1.5 1.5L5 5L8.5 1.5" stroke="#4D6185" stroke-width="2" fill="none"/></svg>
<div class="a" style="left:282px;top:404px;width:87px;height:21px;background:#F0F0F0;border:1px solid #7F9DB9"></div>
<div class="t" style="left:284px;top:407px;letter-spacing:-0.3px">300股指连续</div>
<div class="t" style="left:378px;top:406px">数量</div>
<div class="a" style="left:408px;top:402px;width:66px;height:21px;background:#FFF;border:1px solid #7F9DB9"></div>
<div class="t" style="left:411px;top:404px;font-weight:bold">1</div>
<div class="a" style="left:478px;top:402px;width:15px;height:9px;background:#F0F0F0"></div>
<div class="a" style="left:478px;top:413px;width:15px;height:9px;background:#F0F0F0"></div>
<svg class="a" style="left:481px;top:404px" width="9" height="17"><path d="M1 4.5H8L4.5 1Z" fill="#000"/><path d="M1 12.5H8L4.5 16Z" fill="#000"/></svg>
<div class="a" style="left:282px;top:429px;width:89px;height:20px;background:#FFF;border:1px solid #7F9DB9"></div>
<div class="t" style="left:285px;top:432px">1. 限价</div>
<div class="a" style="left:353px;top:431px;width:16px;height:16px;border-radius:2px;background:linear-gradient(#E6EEFC,#C0D4F8)"></div>
<svg class="a" style="left:356px;top:435px" width="10" height="8"><path d="M1.5 1.5L5 5L8.5 1.5" stroke="#4D6185" stroke-width="2" fill="none"/></svg>
<div class="t" style="left:378px;top:432px">价格</div>
<div class="a" style="left:408px;top:429px;width:65px;height:21px;background:#FFF;border:1px solid #7F9DB9"></div>
<div class="t" style="left:410px;top:431px;font-weight:bold">对手价</div>
<div class="a" style="left:478px;top:429px;width:15px;height:9px;background:#F0F0F0"></div>
<div class="a" style="left:478px;top:440px;width:15px;height:9px;background:#F0F0F0"></div>
<svg class="a" style="left:481px;top:431px" width="9" height="17"><path d="M1 4.5H8L4.5 1Z" fill="#000"/><path d="M1 12.5H8L4.5 16Z" fill="#000"/></svg>
<div class="t" style="left:282px;top:454px">张停<span class="mono" style="font-size:11px;letter-spacing:-0.6px;color:#202020">:3626.6</span><span style="margin-left:5px">跌停</span><span class="mono" style="font-size:11px;letter-spacing:-0.6px;color:#202020">:2967.4</span></div>
<div class="btn" style="left:452px;top:453px;width:39px;height:15px;line-height:12px;font-size:12px">查询</div>

<div class="a" style="left:282px;top:480px;width:13px;height:13px;border:1px solid #1C5180;background:linear-gradient(135deg,#DCDCDC,#FFF)"></div><div class="t" style="left:300px;top:480px">确认</div>
<div class="a" style="left:282px;top:496px;width:13px;height:13px;border:1px solid #1C5180;background:linear-gradient(135deg,#DCDCDC,#FFF)"></div><div class="t" style="left:300px;top:496px">保值</div>
<div class="a" style="left:282px;top:513px;width:13px;height:13px;border:1px solid #1C5180;background:linear-gradient(135deg,#DCDCDC,#FFF)"></div><div class="t" style="left:300px;top:512px">预埋</div>
<div class="a" style="left:332px;top:472px;width:76px;height:54px;border:1px solid #1F4E8C;border-radius:3px;background:linear-gradient(#FBFBFB,#ECEBE6)"></div>
<div class="a" style="left:336px;top:499px;width:68px;height:1px;background:#A8A8A8"></div>
<div class="t mono" style="left:344px;top:479px;font-size:14.5px;font-weight:bold;color:#FF0000;letter-spacing:-0.05px;transform:scaleY(1.22);transform-origin:0 0">3351.8</div>
<div class="t" style="left:350px;top:503px;font-size:20px;line-height:20px;color:#FF5A5A">买入</div>
<div class="a" style="left:415px;top:472px;width:76px;height:54px;border:1px solid #1F4E8C;border-radius:3px;background:linear-gradient(#FBFBFB,#ECEBE6)"></div>
<div class="a" style="left:419px;top:499px;width:68px;height:1px;background:#A8A8A8"></div>
<div class="t mono" style="left:427px;top:479px;font-size:14.5px;font-weight:bold;color:#008000;letter-spacing:-0.05px;transform:scaleY(1.22);transform-origin:0 0">3351.6</div>
<div class="t" style="left:433px;top:503px;font-size:20px;line-height:20px;color:#40A040">卖出</div>

<svg class="a" style="left:262px;top:550px" width="150" height="23"><path d="M69 0.5L78 18.0Q79.5 20.5 83 20.5H122.5Q126.0 20.5 127.5 18.0L136.5 0.5" fill="#F0F0F0" stroke="#8C8C8C"/><path d="M6.5 0.5L15.5 18.0Q17.0 20.5 20.5 20.5H61Q64.5 20.5 66 18.0L75 0.5" fill="#FFF" stroke="#8C8C8C"/></svg>
<div class="t" style="left:281px;top:554px">普通下单</div>
<div class="t" style="left:343px;top:554px">闪电下单</div>

<div class="btn" style="left:516px;top:362px;width:68px;height:20px">快捷平仓</div>
<div class="btn" style="left:591px;top:362px;width:68px;height:20px">全部平仓</div>
<div class="btn" style="left:666px;top:362px;width:93px;height:20px">全部账户平仓</div>
<div class="btn" style="left:766px;top:362px;width:68px;height:20px">快捷反手</div>
<div class="btn" style="left:841px;top:362px;width:38px;height:20px">刷新</div>
<div class="btn" style="left:886px;top:362px;width:68px;height:20px">止损止赢</div>
<div class="btn" style="left:961px;top:362px;width:68px;height:20px">条件单</div>
<div class="btn" style="left:1036px;top:362px;width:38px;height:20px">行权</div>
<div class="btn" style="left:1172px;top:362px;width:38px;height:20px">撤单</div>
<div class="btn" style="left:1217px;top:362px;width:68px;height:20px">全部撤单</div>
<div class="btn" style="left:1292px;top:362px;width:38px;height:20px">刷新</div>
<div class="a" style="left:509px;top:383px;width:637px;height:167px;background:#FFF;border-left:2px solid #909090;border-top:1px solid #B0B0B0"></div>
<div class="a" style="left:511px;top:384px;width:635px;height:20px;background:#F0F0F0"></div>
<div class="a" style="left:511px;top:404px;width:635px;height:2px;background:#ACACAC"></div>
<div class="a" style="left:536px;top:386px;width:1px;height:17px;background:#C8C8C8"></div>
<div class="vl" style="left:536px;top:406px;height:126px"></div>
<div class="a" style="left:708px;top:386px;width:1px;height:17px;background:#C8C8C8"></div>
<div class="vl" style="left:708px;top:406px;height:126px"></div>
<div class="a" style="left:768px;top:386px;width:1px;height:17px;background:#C8C8C8"></div>
<div class="vl" style="left:768px;top:406px;height:126px"></div>
<div class="a" style="left:818px;top:386px;width:1px;height:17px;background:#C8C8C8"></div>
<div class="vl" style="left:818px;top:406px;height:126px"></div>
<div class="a" style="left:963px;top:386px;width:1px;height:17px;background:#C8C8C8"></div>
<div class="vl" style="left:963px;top:406px;height:126px"></div>
<div class="a" style="left:1013px;top:386px;width:1px;height:17px;background:#C8C8C8"></div>
<div class="vl" style="left:1013px;top:406px;height:126px"></div>
<div class="a" style="left:1088px;top:386px;width:1px;height:17px;background:#C8C8C8"></div>
<div class="vl" style="left:1088px;top:406px;height:126px"></div>
<div class="hl" style="left:511px;top:423px;width:635px"></div>
<div class="hl" style="left:511px;top:441px;width:635px"></div>
<div class="hl" style="left:511px;top:459px;width:635px"></div>
<div class="hl" style="left:511px;top:477px;width:635px"></div>
<div class="hl" style="left:511px;top:495px;width:635px"></div>
<div class="hl" style="left:511px;top:513px;width:635px"></div>
<div class="t" style="left:515px;top:388px">序..</div>
<div class="t" style="left:542px;top:388px">品种</div>
<div class="t" style="left:714px;top:388px">均价</div>
<div class="t" style="left:774px;top:388px">今持</div>
<div class="t" style="left:824px;top:388px">总持</div>
<div class="t" style="left:969px;top:388px">市价</div>
<div class="t" style="left:1019px;top:388px">浮动盈亏</div>
<div class="t" style="left:1094px;top:388px">保证金</div>
<div class="t" style="left:515px;top:409px;color:#FF0000">1</div>
<div class="t" style="left:542px;top:409px;color:#FF0000">AG12 白银1612</div>
<div class="t" style="left:714px;top:409px;color:#FF0000">4009.00</div>
<div class="t" style="left:774px;top:409px;color:#FF0000">0</div>
<div class="t" style="left:824px;top:409px;color:#FF0000">2</div>
<div class="t" style="left:969px;top:409px;color:#FF0000">4026...</div>
<div class="t" style="left:1019px;top:409px;color:#FF0000">510.00</div>
<div class="t" style="left:1094px;top:409px;color:#FF0000">15635.10</div>
<div class="t" style="left:515px;top:427px;color:#FF0000">2</div>
<div class="t" style="left:542px;top:427px;color:#FF0000">AL12 沪铝1612</div>
<div class="t" style="left:714px;top:427px;color:#FF0000">12605</div>
<div class="t" style="left:774px;top:427px;color:#FF0000">0</div>
<div class="t" style="left:824px;top:427px;color:#FF0000">2</div>
<div class="t" style="left:969px;top:427px;color:#FF0000">12890</div>
<div class="t" style="left:1019px;top:427px;color:#FF0000">2850.00</div>
<div class="t" style="left:1094px;top:427px;color:#FF0000">11344.50</div>
<div class="t" style="left:515px;top:445px;color:#FF0000">3</div>
<div class="t" style="left:542px;top:445px;color:#FF0000">AU12 黄金1612</div>
<div class="t" style="left:714px;top:445px;color:#FF0000">276.40</div>
<div class="t" style="left:774px;top:445px;color:#FF0000">0</div>
<div class="t" style="left:824px;top:445px;color:#FF0000">2</div>
<div class="t" style="left:969px;top:445px;color:#FF0000">277.10</div>
<div class="t" style="left:1019px;top:445px;color:#FF0000">1400.02</div>
<div class="t" style="left:1094px;top:445px;color:#FF0000">55280.00</div>
<div class="a" style="left:511px;top:532px;width:635px;height:18px;background:#EAEAEA"></div>
<svg class="a" style="left:516px;top:537px" width="6" height="9"><path d="M4.5 1V8L0.5 4.5Z" fill="#404040"/></svg>
<svg class="a" style="left:1135px;top:537px" width="6" height="9"><path d="M1 1V8L5 4.5Z" fill="#404040"/></svg>
<div class="a" style="left:529px;top:534px;width:438px;height:15px;border:1px solid #A0A0A0;border-radius:2px;background:linear-gradient(#F8F8F8,#E4E4E4 50%,#D4D4D4)"></div>
<svg class="a" style="left:743px;top:538px" width="9" height="7"><path d="M1.5 1V6M4.5 1V6M7.5 1V6" stroke="#606060"/></svg>
<div class="a" style="left:510px;top:551px;width:637px;height:21px;background:#EEEEEE;border-bottom:1px solid #B0B0B0"></div>
<div class="a" style="left:510px;top:552px;width:50px;height:19px;background:linear-gradient(#FFF,#F4F4F4);border-right:1px solid #B8B8B8"></div>
<div class="t" style="left:529px;top:554px;font-size:12px">88</div>

<div class="a" style="left:1151px;top:383px;width:338px;height:167px;background:#F0F0F0;border-left:1px solid #A0A0A0;border-top:1px solid #A0A0A0;border-bottom:1px solid #C0C0C0"></div>
<div class="a" style="left:1154px;top:386px;width:335px;height:161px;background:#FFF;border-left:1px solid #909090;border-top:1px solid #909090"></div>
<div class="a" style="left:1155px;top:387px;width:334px;height:20px;background:#F0F0F0"></div>
<div class="a" style="left:1155px;top:407px;width:334px;height:2px;background:#ACACAC"></div>
<div class="a" style="left:1180px;top:389px;width:1px;height:17px;background:#C8C8C8"></div>
<div class="vl" style="left:1180px;top:409px;height:123px"></div>
<div class="a" style="left:1280px;top:389px;width:1px;height:17px;background:#C8C8C8"></div>
<div class="vl" style="left:1280px;top:409px;height:123px"></div>
<div class="a" style="left:1325px;top:389px;width:1px;height:17px;background:#C8C8C8"></div>
<div class="vl" style="left:1325px;top:409px;height:123px"></div>
<div class="a" style="left:1370px;top:389px;width:1px;height:17px;background:#C8C8C8"></div>
<div class="vl" style="left:1370px;top:409px;height:123px"></div>
<div class="a" style="left:1447px;top:389px;width:1px;height:17px;background:#C8C8C8"></div>
<div class="vl" style="left:1447px;top:409px;height:123px"></div>
<div class="hl" style="left:1155px;top:427px;width:334px"></div>
<div class="hl" style="left:1155px;top:445px;width:334px"></div>
<div class="hl" style="left:1155px;top:463px;width:334px"></div>
<div class="hl" style="left:1155px;top:481px;width:334px"></div>
<div class="hl" style="left:1155px;top:499px;width:334px"></div>
<div class="hl" style="left:1155px;top:517px;width:334px"></div>
<div class="t" style="left:1161px;top:391px">序..</div>
<div class="t" style="left:1186px;top:391px">品种</div>
<div class="t" style="left:1286px;top:391px">方向</div>
<div class="t" style="left:1331px;top:391px">类型</div>
<div class="t" style="left:1376px;top:391px">数量</div>
<div class="t" style="left:1453px;top:391px">限价</div>
<div class="t" style="left:1160px;top:412px">1</div>
<div class="t" style="left:1186px;top:412px">IF11 300股指...</div>
<div class="t" style="left:1286px;top:412px">买入</div>
<div class="t" style="left:1331px;top:412px">限价</div>
<div class="t" style="left:1376px;top:412px">7/0</div>
<div class="t" style="left:1453px;top:412px">3310.00</div>
<div class="a" style="left:1155px;top:532px;width:334px;height:16px;background:#EAEAEA"></div>
<svg class="a" style="left:1160px;top:536px" width="6" height="9"><path d="M4.5 1V8L0.5 4.5Z" fill="#404040"/></svg>
<div class="a" style="left:1173px;top:534px;width:219px;height:13px;border:1px solid #A0A0A0;border-radius:2px;background:linear-gradient(#F8F8F8,#E4E4E4 50%,#D4D4D4)"></div>
<svg class="a" style="left:1278px;top:537px" width="9" height="7"><path d="M1.5 1V6M4.5 1V6M7.5 1V6" stroke="#606060"/></svg>

<svg class="a" style="left:1145px;top:550px" width="344" height="23"><path d="M267 0.5L276 18.0Q277.5 20.5 281 20.5H321Q324.5 20.5 326 18.0L335 0.5" fill="#F0F0F0" stroke="#8C8C8C"/><path d="M205 0.5L214 18.0Q215.5 20.5 219 20.5H259Q262.5 20.5 264 18.0L273 0.5" fill="#F0F0F0" stroke="#8C8C8C"/><path d="M144 0.5L153 18.0Q154.5 20.5 158 20.5H197Q200.5 20.5 202 18.0L211 0.5" fill="#F0F0F0" stroke="#8C8C8C"/><path d="M83.5 0.5L92.5 18.0Q94.0 20.5 97.5 20.5H136Q139.5 20.5 141 18.0L150 0.5" fill="#F0F0F0" stroke="#8C8C8C"/><path d="M8.5 0.5L17.5 18.0Q19.0 20.5 22.5 20.5H75.5Q79.0 20.5 80.5 18.0L89.5 0.5" fill="#FFF" stroke="#8C8C8C"/></svg>
<div class="t" style="left:1165px;top:554px">未成交委托</div>
<div class="t" style="left:1238px;top:554px">成交明细</div>
<div class="t" style="left:1298px;top:554px">委托记录</div>
<div class="t" style="left:1359px;top:554px">品种列表</div>
<div class="t" style="left:1421px;top:554px">下单队列</div>
<!-- MSG -->
<!-- ============ MESSAGE WINDOW ============ -->
<div class="a" style="left:0;top:576px;width:1489px;height:20px;background:#98B2D1"></div>
<div class="t" style="left:4px;top:581px;font-size:12px">消息窗口</div>
<div class="a" style="left:0;top:596px;width:1489px;height:2px;background:#F0F0F0"></div><div class="a" style="left:1px;top:598px;width:1488px;height:139px;background:#FFF;border-top:1px solid #A0A0A0;border-left:1px solid #A0A0A0"></div>

<div class="t mono" style="left:3px;top:602px;font-size:12px;line-height:14px;letter-spacing:-0.2px">611453067</div>
<div class="t mono" style="left:3px;top:619px;font-size:12px;line-height:14px;letter-spacing:-0.2px"><span style="font-size:13px;letter-spacing:0">未成交</span>611453067</div>
<div class="t mono" style="left:3px;top:636px;font-size:12px;line-height:14px;letter-spacing:-0.2px"><span style="font-size:13px;letter-spacing:0">未成交</span>611453067</div>
<div class="t mono" style="left:3px;top:653px;font-size:12px;line-height:14px;letter-spacing:-0.2px"><span style="font-size:13px;letter-spacing:0">未成交</span>611453067</div>
<div class="t mono" style="left:3px;top:670px;font-size:12px;line-height:14px;letter-spacing:-0.2px"><span style="font-size:13px;letter-spacing:0">未成交</span>611453067</div>
<div class="t mono" style="left:3px;top:687px;font-size:12px;line-height:14px;letter-spacing:-0.2px"><span style="font-size:13px;letter-spacing:0">未成交</span>611453067</div>
<div class="t mono" style="left:3px;top:704px;font-size:12px;line-height:14px;letter-spacing:-0.2px"><span style="font-size:13px;letter-spacing:0">未成交</span>611453067</div>
<div class="t mono" style="left:3px;top:721px;font-size:12px;line-height:14px;letter-spacing:-0.2px"><span style="font-size:13px;letter-spacing:0">未成交</span>611453067</div>
<div class="a" style="left:0;top:732px;width:1489px;height:5px;background:#F8F8F8;border-top:1px solid #E4E4E4"></div>
</body></html>
